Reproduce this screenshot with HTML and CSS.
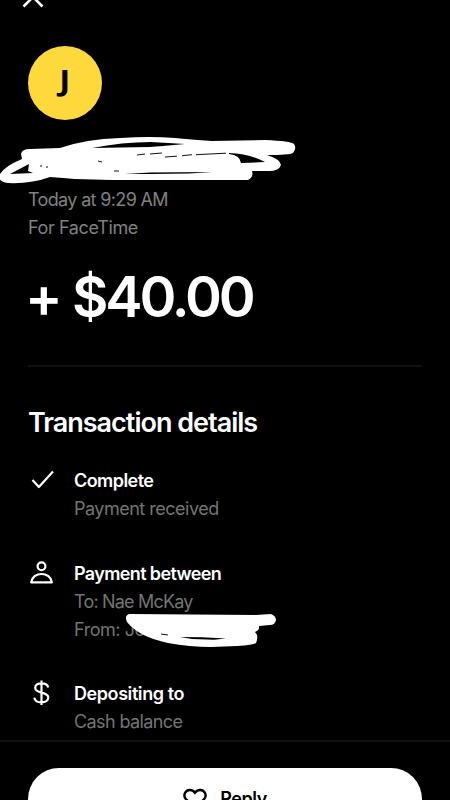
FILE: index.html
```html
<!DOCTYPE html>
<html lang="en">
<head>
<meta charset="utf-8">
<title>Transaction details</title>
<link rel="stylesheet" href="styles.css">
</head>
<body>
<main class="screen">
  <section class="summary">
    <svg class="close" viewBox="0 0 24 24"><path d="M2.5 2.5 21.5 21.5M21.5 2.5 2.5 21.5"/></svg>
    <div class="avatar"><span>J</span></div>
    <p class="meta"><span class="when">Today at 9:29 AM</span><br><span class="note">For FaceTime</span></p>
    <h1 class="amount"><span class="plus">+</span><span class="value">$40.00</span></h1>
  </section>
  <section class="details">
    <h2>Transaction details</h2>
    <div class="row">
      <svg class="icon" viewBox="0 0 28 28"><path d="m4.500 13 6.400 7L25 4.500"/></svg>
      <div><h3 class="complete">Complete</h3><p class="received">Payment received</p></div>
    </div>
    <div class="row between">
      <svg class="icon" viewBox="0 0 28 28"><circle cx="13.500" cy="6.300" r="3.900"/><path d="M3.100 22.300C3.900 17.200 8.300 14 13.500 14s9.600 3.200 10.400 8.300Z"/></svg>
      <div><h3 class="payment">Payment between</h3><p class="to">To: Nae McKay</p><p class="from">From: Jo</p></div>
    </div>
    <div class="row deposit">
      <svg class="icon" viewBox="0 0 28 28"><path d="M13.500 .5V25M20.200 7.500C19.700 4.800 17.100 3.300 13.500 3.300c-3.700 0-6.300 1.700-6.300 4.500 0 3.200 3 4 6.300 4.800 3.700.9 6.800 1.800 6.800 5 0 3-2.900 4.800-6.800 4.800-4.100 0-6.700-1.700-7.200-4.800"/></svg>
      <div><h3 class="depositing">Depositing to</h3><p class="cash">Cash balance</p></div>
    </div>
  </section>
  <footer class="actions">
    <button class="reply"><svg viewBox="0 0 24 22"><path d="M12 20 3.300 11.500C1.500 9.700 1 7 2 5c1.800-3.800 7-4.200 10-.3C15 .8 20.200 1.200 22 5c1 2 .5 4.700-1.300 6.500Z"/></svg><span>Reply</span></button>
  </footer>
  <svg class="scribble" viewBox="0 0 450 800">
    <g class="ink">
      <path d="M21 154Q22 149 30 149L60 148Q86 139 120 138Q150 136 175 138Q195 140 212 141L265 140Q291 141 294 144Q297 148 293 153Q289 155 267 155Q280 159 281 165Q279 171 269 171L252 171Q254 177 248 180L112 180L75 179Q64 178 50 177Q31 184 8 183Q-3 182 0 174Q5 166 22 159Z"/>
      <path d="M127 622Q124 616 129 614L256 615L271 614Q276 616 276 620Q275 625 270 625L259 626Q260 630 255 632Q259 636 256 643Q253 645 237 646L211 647Q190 647 168 643Q139 637 127 622Z"/>
    </g>
    <g class="gap">
      <path d="M10 174 29 164 28 171 33 173Z"/>
      <path d="M92 148Q122 142 151 142L185 144 163 146 150 147Z"/>
      <path d="M229 153Q250 154 265 162L241 163Q240 155 229 154Z"/>
      <path d="m125 174 25-1.500 62-.5-23 1.500-39 .5Z"/>
      <path d="m180 637 22 .2 24 1.300-12 1.200-22-.8Z"/>
    </g>
    <path class="speck" d="m137 155 8-1m20 3 12-.8m5-.5 10-1m4 0 30-1.500M150 154l12-1M40 166h2m4 1h2m50-6 4 1m12 9h5m42 463 7 1"/>
  </svg>
</main>
</body>
</html>
```
FILE: styles.css
```css
* { box-sizing: border-box; margin: 0; padding: 0; }
body { background: #000; color: #fff; font-family: Inter, "Liberation Sans", sans-serif; overflow: hidden; }
.screen { position: relative; width: 450px; height: 800px; overflow: hidden; display: flex; flex-direction: column; }
.summary { margin: 0 28px; height: 367px; border-bottom: 2px solid #101010; flex: none; }
svg { fill: none; stroke: currentColor; display: block; }
.close { width: 24px; height: 24px; margin: -15.500px 0 0 -7.500px; stroke-width: 2.600; }
.avatar { width: 74px; height: 74px; margin-top: 37px; border-radius: 50%; background: #fdd93b; color: #000; display: flex; align-items: center; justify-content: center; padding-bottom: 6px; font: 700 29px "Noto Sans", sans-serif; }
.avatar span { transform: scaleX(1.15); }
.meta { margin-top: 66px; color: #818181; font-size: 18px; line-height: 28px; white-space: nowrap; }
.when { letter-spacing: -.65px; }
.note { letter-spacing: -.38px; }
.amount { margin-top: 20px; font-size: 56px; line-height: 70px; font-weight: 600; white-space: nowrap; display: flex; letter-spacing: -3.100px; }
.plus { width: 47px; margin-left: -3px; }
.details { flex: 1; padding: 39px 28px 0; }
h2 { font-size: 27px; line-height: 34px; font-weight: 600; letter-spacing: -1px; white-space: nowrap; }
.row { display: flex; gap: 18px; margin-top: 27px; }
.between { margin-top: 36.500px; }
.deposit { margin-top: 36px; }
.row h3, .row p { font-size: 18px; line-height: 28px; white-space: nowrap; letter-spacing: -.55px; }
.row h3 { font-weight: 600; }
.row p { color: #747474; }
.row .received { letter-spacing: -.5px; }
.row .to { letter-spacing: -.8px; }
.row .from { letter-spacing: -.45px; }
.row .payment { letter-spacing: -.63px; }
.row .depositing { letter-spacing: -.42px; }
.row .cash { letter-spacing: -.6px; }
.icon { width: 28px; height: 28px; stroke-width: 2.200; stroke-linejoin: round; flex: none; }
.actions { height: 60px; flex: none; border-top: 2px solid #101010; padding: 26px 28px 0; }
.reply { width: 394px; height: 62px; border: 0; border-radius: 31px; background: #fff; color: #000; display: flex; align-items: center; justify-content: center; gap: 13px; font: 600 18px Inter, sans-serif; letter-spacing: -.45px; }
.reply svg { width: 24px; height: 22px; stroke-width: 2.400; }
.reply span { margin-top: -2px; }
.scribble { position: absolute; inset: 0; width: 450px; height: 800px; pointer-events: none; }
.ink { fill: #fff; stroke: none; }
.gap { fill: #000; stroke: none; }
.speck { stroke: #111; stroke-width: 1; }
```
